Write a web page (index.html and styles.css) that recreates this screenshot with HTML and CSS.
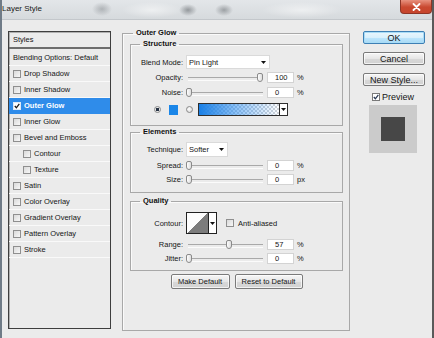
FILE: index.html
```html
<!DOCTYPE html>
<html>
<head>
<meta charset="utf-8">
<link rel="stylesheet" href="styles.css">
</head>
<body>
<div class="window">
  <div class="titlebar">
    <span class="title">Layer Style</span>
    <div class="close"><svg width="9" height="8" viewBox="0 0 9 8"><path d="M1.5 1 L7.5 7 M7.5 1 L1.5 7" stroke="#fff" stroke-width="1.8" stroke-linecap="round"/></svg></div>
  </div>
  <div class="content">
    <div class="styles">
      <div class="row head">Styles</div>
      <div class="row blend">Blending Options: Default</div>
      <div class="row"><span class="cb"></span>Drop Shadow</div>
      <div class="row"><span class="cb"></span>Inner Shadow</div>
      <div class="row sel"><span class="cb on"><svg width="6" height="6" viewBox="0 0 6 6"><path d="M0.8 3 L2.4 4.8 L5.3 0.9" fill="none" stroke="#1a1a1a" stroke-width="1.3"/></svg></span>Outer Glow</div>
      <div class="row"><span class="cb"></span>Inner Glow</div>
      <div class="row"><span class="cb"></span>Bevel and Emboss</div>
      <div class="row ind"><span class="cb"></span>Contour</div>
      <div class="row ind"><span class="cb"></span>Texture</div>
      <div class="row"><span class="cb"></span>Satin</div>
      <div class="row"><span class="cb"></span>Color Overlay</div>
      <div class="row"><span class="cb"></span>Gradient Overlay</div>
      <div class="row"><span class="cb"></span>Pattern Overlay</div>
      <div class="row"><span class="cb"></span>Stroke</div>
    </div>

    <fieldset class="grp outer">
      <legend class="lg-outer">Outer Glow</legend>

      <fieldset class="grp sub structure">
        <legend>Structure</legend>
        <div class="frow r14">
          <span class="lbl">Blend Mode:</span>
          <div class="select wide"><span>Pin Light</span><svg width="5" height="3" viewBox="0 0 5 3"><polygon points="0,0 5,0 2.5,3" fill="#111"/></svg></div>
        </div>
        <div class="frow r11 mt3">
          <span class="lbl">Opacity:</span>
          <div class="slider"><span class="thumb" style="--v:100"></span></div>
          <div class="num">100</div><span class="unit">%</span>
        </div>
        <div class="frow r11 mt4">
          <span class="lbl">Noise:</span>
          <div class="slider"><span class="thumb" style="--v:0"></span></div>
          <div class="num">0</div><span class="unit">%</span>
        </div>
        <div class="frow r13 mt5 colors">
          <span class="radio on"></span>
          <span class="swatch"></span>
          <span class="radio"></span>
          <div class="gradient"><span class="gfill"></span><span class="garrow"><svg width="5" height="3" viewBox="0 0 5 3"><polygon points="0,0 5,0 2.5,3" fill="#111"/></svg></span></div>
        </div>
      </fieldset>

      <fieldset class="grp sub elements">
        <legend>Elements</legend>
        <div class="frow r15">
          <span class="lbl">Technique:</span>
          <div class="select short"><span>Softer</span><svg width="5" height="3" viewBox="0 0 5 3"><polygon points="0,0 5,0 2.5,3" fill="#111"/></svg></div>
        </div>
        <div class="frow r11 mt3">
          <span class="lbl">Spread:</span>
          <div class="slider"><span class="thumb" style="--v:0"></span></div>
          <div class="num">0</div><span class="unit">%</span>
        </div>
        <div class="frow r11 mt3">
          <span class="lbl">Size:</span>
          <div class="slider"><span class="thumb" style="--v:0"></span></div>
          <div class="num">0</div><span class="unit">px</span>
        </div>
      </fieldset>

      <fieldset class="grp sub quality">
        <legend>Quality</legend>
        <div class="frow r22">
          <span class="lbl">Contour:</span>
          <div class="contour"><span class="curve"></span><span class="carrow"><svg width="5" height="3" viewBox="0 0 5 3"><polygon points="0,0 5,0 2.5,3" fill="#111"/></svg></span></div>
          <span class="cb aa"></span><span>Anti-aliased</span>
        </div>
        <div class="frow r11 mt5">
          <span class="lbl">Range:</span>
          <div class="slider"><span class="thumb" style="--v:57"></span></div>
          <div class="num">57</div><span class="unit">%</span>
        </div>
        <div class="frow r11 mt3">
          <span class="lbl">Jitter:</span>
          <div class="slider"><span class="thumb" style="--v:0"></span></div>
          <div class="num">0</div><span class="unit">%</span>
        </div>
      </fieldset>

      <div class="actions">
        <div class="btn small make">Make Default</div>
        <div class="btn small reset">Reset to Default</div>
      </div>
    </fieldset>

    <div class="side">
      <div class="btn big ok">OK</div>
      <div class="btn big">Cancel</div>
      <div class="btn big">New Style...</div>
      <div class="preview-row"><span class="cb on pv"><svg width="6" height="6" viewBox="0 0 6 6"><path d="M0.8 3 L2.4 4.8 L5.3 0.9" fill="none" stroke="#2b3a55" stroke-width="1.3"/></svg></span><span>Preview</span></div>
      <div class="preview"><span class="pv-square"></span></div>
    </div>
  </div>
</div>
</body>
</html>
```

FILE: styles.css
```css
* { box-sizing: border-box; }
html, body { margin: 0; padding: 0; }
body {
  width: 434px;
  height: 338px;
  overflow: hidden;
  background: #ebebeb;
  font-family: "Liberation Sans", Arial, sans-serif;
  font-size: 7.5px;
  color: #151515;
}
.window {
  width: 434px;
  height: 338px;
  border-left: 2px solid #6f7b87;
  border-right: 2px solid #5a5a5a;
  background: #ebebeb;
  display: flex;
  flex-direction: column;
}
.titlebar {
  height: 20px;
  flex: none;
  display: flex;
  align-items: flex-start;
  justify-content: space-between;
  border-bottom: 1px solid #c3c7cb;
  background:
    radial-gradient(ellipse 10px 7px at 100px 9px, rgba(90,95,100,.35), transparent),
    radial-gradient(ellipse 9px 6px at 186px 10px, rgba(60,65,70,.45), transparent),
    radial-gradient(ellipse 9px 6px at 222px 10px, rgba(60,65,70,.4), transparent),
    radial-gradient(ellipse 30px 8px at 150px 10px, rgba(255,255,255,.5), transparent),
    radial-gradient(ellipse 40px 8px at 300px 10px, rgba(255,255,255,.5), transparent),
    linear-gradient(#e3e6e9, #d6dadd);
}
.title {
  font-size: 8px;
  line-height: 18px;
  color: #1a1a1a;
  padding-left: 0;
}
.close {
  width: 32px;
  height: 14px;
  display: flex;
  align-items: center;
  justify-content: center;
  background: linear-gradient(#e8927f, #c9482f 55%, #c6452d);
  border: 1px solid #8e3526;
  border-top: none;
  border-radius: 0 0 4px 4px;
}
.content {
  display: flex;
  align-items: flex-start;
  padding: 8px 0 0 6px;
}

/* styles list */
.styles {
  width: 103px;
  height: 298px;
  margin-top: 3px;
  border: 1px solid #3e3e3e;
  background: #ebebeb;
  box-shadow: inset 1px 1px 0 #b0b0b0;
}
.row {
  height: 16px;
  display: flex;
  align-items: center;
  padding-left: 4px;
  border-bottom: 1px solid #f9f9f9;
  white-space: nowrap;
}
.row.head { height: 17px; border-bottom: 2px solid #6d6d6d; border-top: 0; }
.row.blend { height: 17px; }
.row.ind { padding-left: 14px; }
.row.sel { background: #2f8cea; color: #fff; font-weight: bold; border-bottom-color: #2f8cea; }
.cb {
  width: 8px;
  height: 8px;
  flex: none;
  margin-right: 3px;
  border: 1px solid #8f8f8f;
  background: linear-gradient(135deg, #d9d9d9, #f7f7f7);
  display: flex;
  align-items: center;
  justify-content: center;
}
.cb.on { background: #fff; border-color: #7a7a7a; }
.row.sel .cb { border-color: #dfe9f5; }

/* group boxes */
.grp {
  margin: 0;
  min-inline-size: 0;
  border: 1px solid #a8a8a8;
  box-shadow: inset 1px 1px 0 #fafafa;
}
.grp legend {
  font-weight: bold;
  line-height: 10px;
  padding: 0 3px;
  margin-left: 9px;
  color: #111;
}
.outer {
  width: 228px;
  margin-left: 11px;
  padding: 1px 6px 41px 7px;
}
.outer > legend.lg-outer { margin-left: 3px; }
.sub {
  width: 213px;
  padding: 0;
}
.structure { padding-top: 6px; padding-bottom: 9px; margin-top: 0; }
.elements { padding-top: 5px; padding-bottom: 7px; margin-top: 1px; }
.quality { padding-top: 6px; padding-bottom: 6px; margin-top: 3px; }

.frow { display: flex; align-items: center; white-space: nowrap; }
.r11 { height: 11px; }
.r13 { height: 13px; }
.r14 { height: 14px; }
.r15 { height: 15px; }
.r22 { height: 22px; }
.mt3 { margin-top: 3px; }
.mt4 { margin-top: 4px; }
.mt5 { margin-top: 5px; }
.lbl { width: 52px; text-align: right; margin-right: 3px; flex: none; }

.select {
  height: 100%;
  background: #fff;
  border: 1px solid #dadada;
  display: flex;
  align-items: center;
  justify-content: space-between;
  padding: 0 3px 0 2px;
}
.select.wide { width: 84px; }
.select.short { width: 42px; }

.slider {
  position: relative;
  width: 78px;
  height: 11px;
  margin-right: 3px;
  flex: none;
}
.slider::before {
  content: "";
  position: absolute;
  left: 2px;
  right: 1px;
  top: 5px;
  height: 2px;
  border-top: 1px solid #a9a9a9;
  border-bottom: 1px solid #fbfbfb;
}
.thumb {
  position: absolute;
  top: 1px;
  left: calc(var(--v) * 0.71px);
  width: 6px;
  height: 9px;
  border: 1px solid #8a8a8a;
  border-radius: 2px 2px 3px 3px;
  background: linear-gradient(90deg, #fdfdfd, #dedede);
}
.num {
  width: 27px;
  height: 11px;
  flex: none;
  background: #fff;
  border: 1px solid #d3d3d3;
  padding-left: 7px;
  line-height: 9px;
  margin-right: 2px;
}
.unit { padding-left: 1px; }

.colors { padding-left: 23px; }
.radio {
  width: 7px;
  height: 7px;
  flex: none;
  border-radius: 50%;
  border: 1px solid #8a8a8a;
  background: radial-gradient(circle at 40% 40%, #fff, #d0d0d0);
}
.radio.on { background: radial-gradient(circle, #263243 0 1.6px, #e8e8e8 2px); }
.colors .radio.on { margin-right: 8px; }
.swatch {
  width: 9px;
  height: 10px;
  flex: none;
  background: #1b86e8;
  margin-right: 8px;
}
.colors .radio:not(.on) { margin-right: 5px; }
.gradient {
  width: 90px;
  height: 13px;
  flex: none;
  border: 1px solid #2e2e2e;
  display: flex;
}
.gfill {
  flex: 1;
  background:
    linear-gradient(90deg, #1a80e6, rgba(40,140,240,.55) 45%, rgba(255,255,255,0)),
    repeating-conic-gradient(#cfd3d8 0 25%, #ffffff 0 50%) 0 0 / 4px 4px;
}
.garrow {
  width: 8px;
  border-left: 1px solid #2e2e2e;
  background: #fff;
  display: flex;
  align-items: center;
  justify-content: center;
}

.contour {
  width: 31px;
  height: 22px;
  flex: none;
  border: 1px solid #222;
  display: flex;
  margin-right: 9px;
}
.curve {
  flex: 1;
  background: linear-gradient(to top left, #7c7c7c 50%, #fdfdfd 50%);
}
.carrow {
  width: 8px;
  border-left: 1px solid #222;
  background: #fff;
  display: flex;
  align-items: center;
  justify-content: center;
}
.cb.aa { margin-right: 4px; }

.actions {
  display: flex;
  justify-content: center;
  gap: 5px;
  margin-top: 3px;
}
.btn {
  display: flex;
  align-items: center;
  justify-content: center;
  border: 1px solid #7a7a7a;
  border-radius: 2px;
  background: linear-gradient(#f6f6f6, #e6e6e6 50%, #d8d8d8 51%, #d2d2d2);
  box-shadow: inset 0 0 0 1px rgba(255,255,255,.7);
  white-space: nowrap;
}
.btn.small { height: 15px; }
.btn.make { width: 59px; }
.btn.reset { width: 68px; }

.side {
  width: 62px;
  margin-left: 13px;
  margin-top: 3px;
  display: flex;
  flex-direction: column;
  font-size: 9px;
}
.btn.big { height: 13px; width: 62px; margin-bottom: 8px; }
.btn.big:nth-child(3) { margin-bottom: 6px; }
.btn.ok {
  border-color: #3d7fb4;
  box-shadow: inset 0 0 0 1px #a9dcf6;
  background: linear-gradient(#eaf6fd, #d9f0fc 50%, #bee6fd 51%, #a7d9f5);
}
.preview-row {
  height: 9px;
  display: flex;
  align-items: center;
  padding-left: 9px;
}
.cb.pv { margin-right: 2px; }
.preview {
  width: 48px;
  height: 48px;
  margin: 4px 0 0 6px;
  background: #cbcbcb;
  display: flex;
  align-items: center;
  justify-content: center;
}
.pv-square {
  width: 24px;
  height: 24px;
  background: #474747;
}
```
